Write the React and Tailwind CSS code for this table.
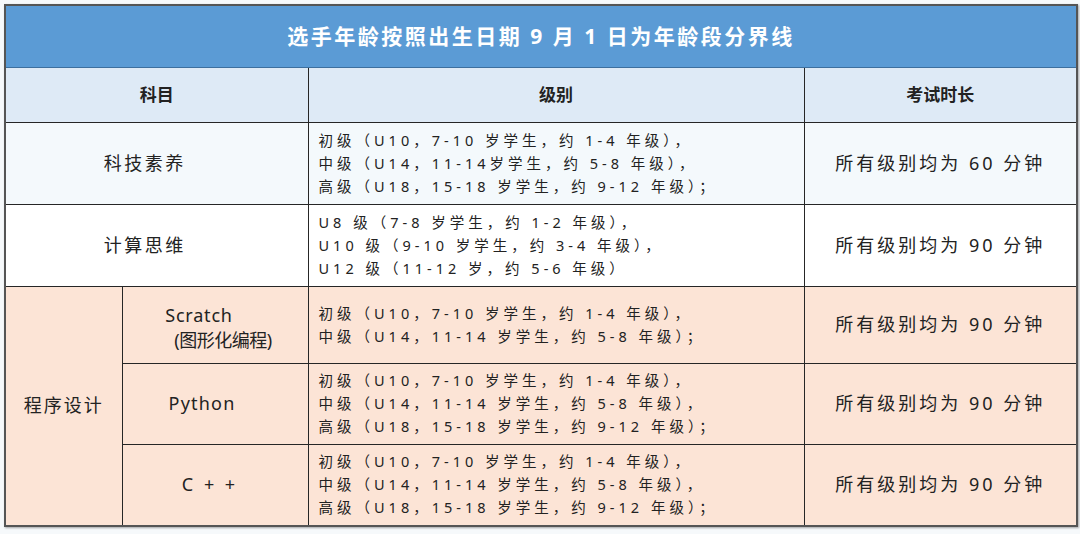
import React from 'react';

const font = { fontFamily: '"Noto Sans", "Noto Sans CJK SC", sans-serif' };

const cell = 'border border-[#262626] text-[#222]';

function Levels({ lines }) {
  return (
    <div className="text-[14.5px] leading-[23px] tracking-[4px] text-left pl-[10px] whitespace-nowrap">
      {lines.map((l, i) => (
        <div key={i}>{l}</div>
      ))}
    </div>
  );
}

const junior = '初级（U10，7-10 岁学生，约 1-4 年级），';
const middle = '中级（U14，11-14 岁学生，约 5-8 年级），';
const senior = '高级（U18，15-18 岁学生，约 9-12 年级）；';

function Duration({ mins }) {
  return (
    <span className="text-[18px] tracking-[3px]">所有级别均为 {mins} 分钟</span>
  );
}

export default function App() {
  return (
    <div className="w-[1080px] h-[534px] bg-[#f6f9fb] pt-[4px] pl-[4px]" style={font}>
      <table className="table-fixed border-collapse w-[1072px] border-2 border-[#555] shadow-[1px_1px_2px_rgba(0,0,0,0.35)]">
        <colgroup>
          <col className="w-[117px]" />
          <col className="w-[186px]" />
          <col className="w-[496px]" />
          <col className="w-[273px]" />
        </colgroup>
        <tbody>
          <tr className="h-[62px] bg-[#5b9bd5]">
            <td colSpan={4} className="border border-[#3d6f9e] text-center text-white font-bold text-[21px] tracking-[2.5px]">
              选手年龄按照出生日期 9 月 1 日为年龄段分界线
            </td>
          </tr>
          <tr className="h-[55px] bg-[#deeaf6] font-bold text-[17px]">
            <td colSpan={2} className={`${cell} text-center`}>科目</td>
            <td className={`${cell} text-center`}>级别</td>
            <td className={`${cell} text-center border-l-[#666]`}>考试时长</td>
          </tr>
          <tr className="h-[82px] bg-[#f4f9fc]">
            <td colSpan={2} className={`${cell} text-center text-[18px] tracking-[2.5px] pr-[24px]`}>科技素养</td>
            <td className={cell}>
              <Levels lines={['初级（U10，7-10 岁学生，约 1-4 年级），', '中级（U14，11-14岁学生，约 5-8 年级），', senior]} />
            </td>
            <td className={`${cell} text-center`}><Duration mins="60" /></td>
          </tr>
          <tr className="h-[82px] bg-white">
            <td colSpan={2} className={`${cell} text-center text-[18px] tracking-[2.5px] pr-[24px]`}>计算思维</td>
            <td className={cell}>
              <Levels lines={['U8 级（7-8 岁学生，约 1-2 年级），', 'U10 级（9-10 岁学生，约 3-4 年级），', 'U12 级（11-12 岁，约 5-6 年级）']} />
            </td>
            <td className={`${cell} text-center`}><Duration mins="90" /></td>
          </tr>
          <tr className="h-[77px] bg-[#fce4d6]">
            <td rowSpan={3} className={`${cell} text-center text-[18px] tracking-[2px]`}>程序设计</td>
            <td className={`${cell} text-center text-[18px] leading-[25px] pt-[6px]`}>
              <div className="tracking-[0.8px] pr-[32px]">Scratch</div>
              <div className="tracking-[-0.5px] pl-[16px]">(图形化编程)</div>
            </td>
            <td className={cell}>
              <Levels lines={[junior, '中级（U14，11-14 岁学生，约 5-8 年级）；']} />
            </td>
            <td className={`${cell} text-center`}><Duration mins="90" /></td>
          </tr>
          <tr className="h-[81px] bg-[#fce4d6]">
            <td className={`${cell} text-center text-[18px] tracking-[1.2px] pr-[26px]`}>Python</td>
            <td className={cell}>
              <Levels lines={[junior, middle, senior]} />
            </td>
            <td className={`${cell} text-center`}><Duration mins="90" /></td>
          </tr>
          <tr className="h-[82px] bg-[#fce4d6]">
            <td className={`${cell} text-center text-[18px] tracking-[3px] pr-[10px]`}>C + +</td>
            <td className={cell}>
              <Levels lines={[junior, middle, senior]} />
            </td>
            <td className={`${cell} text-center`}><Duration mins="90" /></td>
          </tr>
        </tbody>
      </table>
    </div>
  );
}
